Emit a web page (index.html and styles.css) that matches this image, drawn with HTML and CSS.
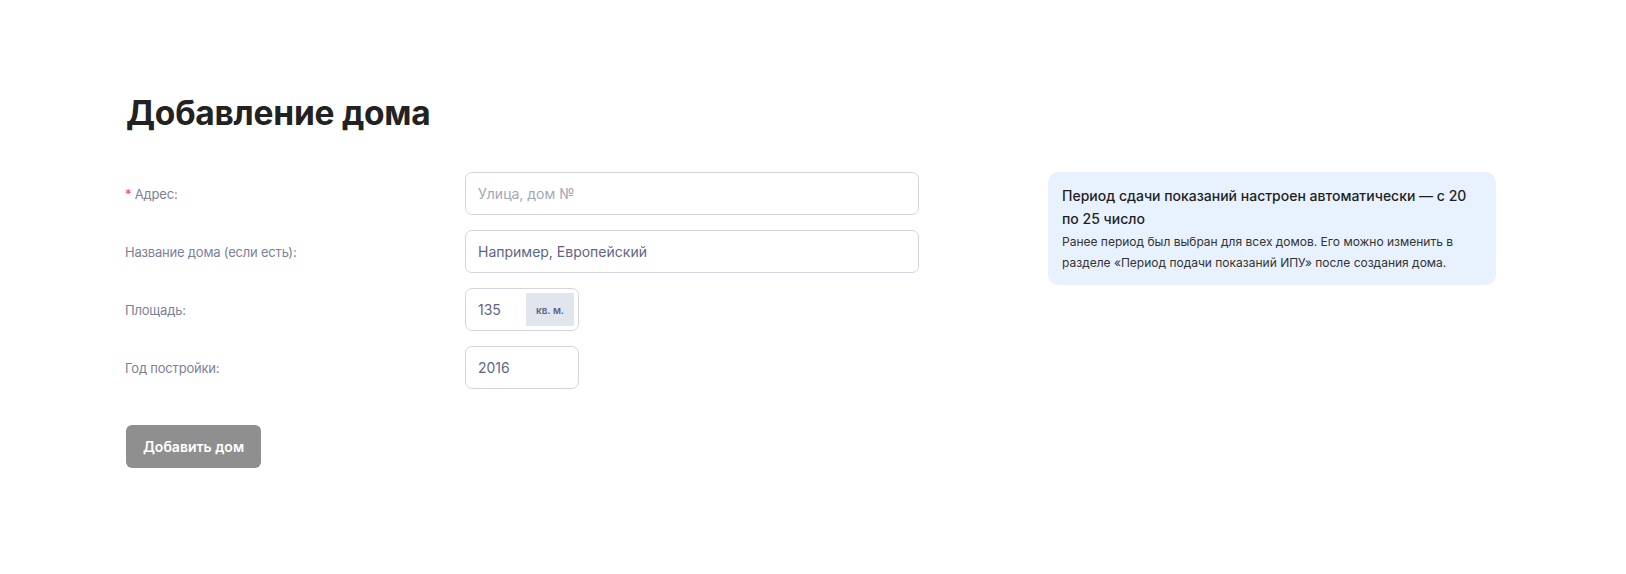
FILE: index.html
```html
<!DOCTYPE html>
<html>
<head>
    <meta charset="utf-8">
    <link rel="stylesheet" href="styles.css">
</head>
<body>
    <div class="page">
        <h1 class="title">Добавление дома</h1>

        <div class="content">
            <form class="house-form">
                <div class="row">
                    <label class="label"><span class="req">*</span> Адрес:</label>
                    <input class="field" type="text" placeholder="Улица, дом №">
                </div>
                <div class="row">
                    <label class="label">Название дома (если есть):</label>
                    <input class="field" type="text" value="Например, Европейский">
                </div>
                <div class="row">
                    <label class="label">Площадь:</label>
                    <div class="field field-small with-unit">
                        <span class="value">135</span>
                        <span class="unit">кв. м.</span>
                    </div>
                </div>
                <div class="row">
                    <label class="label">Год постройки:</label>
                    <input class="field field-small" type="text" value="2016">
                </div>

                <button type="button" class="button">Добавить дом</button>
            </form>

            <div class="notice">
                <h3>Период сдачи показаний настроен автоматически — с 20 по 25 число</h3>
                <p>Ранее период был выбран для всех домов. Его можно изменить в разделе «Период подачи показаний ИПУ» после создания дома.</p>
            </div>
        </div>
    </div>
</body>
</html>
```

FILE: styles.css
```css
body {
    margin: 0;
    background: #fff;
    font-family: Inter, 'Noto Sans', sans-serif;
    color: #1f1f1f;
}

.page {
    padding: 93px 0 0 125px;
}

.title {
    margin: 0 0 39px 1px;
    font-size: 33.5px;
    font-weight: 700;
    letter-spacing: -0.25px;
    color: #222;
}

.content {
    display: flex;
    align-items: flex-start;
    gap: 129px;
}

.house-form {
    display: flex;
    flex-direction: column;
}

.row {
    display: grid;
    grid-template-columns: 340px auto;
    align-items: center;
    margin-bottom: 15px;
}

.label {
    font-size: 13px;
    color: #7d819a;
    letter-spacing: -0.2px;
}

.req {
    color: #f0474f;
}

.field {
    box-sizing: border-box;
    width: 454px;
    height: 43px;
    padding: 0 12px;
    border: 1px solid #d3d5e6;
    border-radius: 7px;
    font-family: inherit;
    font-size: 14px;
    color: #5f6587;
    background: #fff;
    outline: none;
}

.field::placeholder {
    color: #a3a7bb;
}

.field-small {
    width: 114px;
}

.with-unit {
    display: flex;
    align-items: center;
    justify-content: space-between;
    padding: 4px 4px 4px 12px;
}

.unit {
    align-self: stretch;
    display: flex;
    align-items: center;
    justify-content: center;
    width: 48px;
    background: #e1e5ee;
    font-size: 10px;
    font-weight: 600;
    color: #5c6285;
}

.button {
    align-self: flex-start;
    margin-top: 21px;
    margin-left: 1px;
    width: 135px;
    height: 43px;
    border: none;
    border-radius: 6px;
    background: #8f8f8f;
    color: #fff;
    font-family: inherit;
    font-size: 14px;
    font-weight: 600;
    cursor: pointer;
}

.notice {
    box-sizing: border-box;
    width: 448px;
    padding: 12px 14px 12px 14px;
    background: #e7f2fe;
    border-radius: 10px;
}

.notice h3 {
    margin: 0 0 1px 0;
    font-size: 14px;
    font-weight: 500;
    line-height: 23px;
    color: #1f1f1f;
}

.notice p {
    margin: 0;
    font-size: 12px;
    line-height: 21px;
    color: #333;
}
```
